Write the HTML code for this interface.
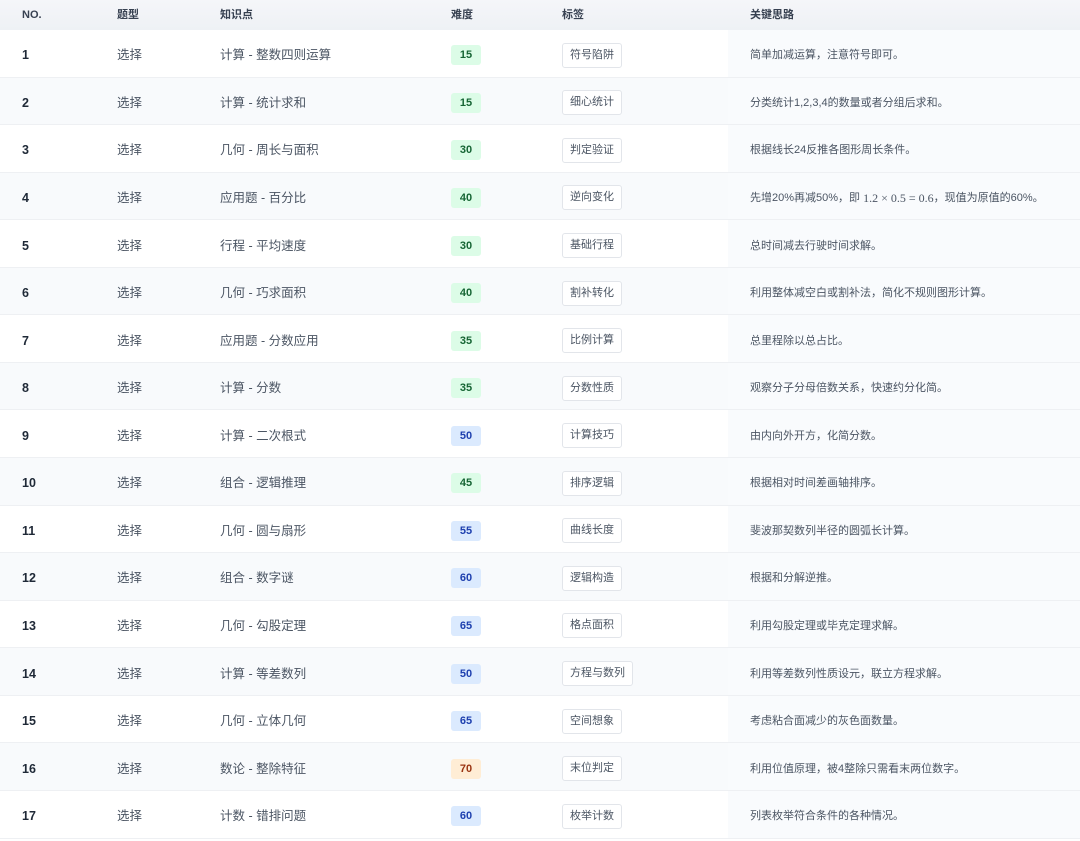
<!DOCTYPE html>
<html><head><meta charset="utf-8"><style>
*{margin:0;padding:0;box-sizing:border-box}
body{width:1080px;height:841px;overflow:hidden;background:#fff;font-family:"Liberation Sans","Noto Sans CJK SC",sans-serif;color:#1f2937}
.hd{position:absolute;left:0;top:0;width:1080px;height:30px;background:linear-gradient(#f5f6f9,#eef1f5);font-size:11px;font-weight:bold;color:#374151}
.hd>span,.r>span{position:absolute;top:0;height:100%;display:flex;align-items:center;white-space:nowrap;line-height:14px}
.r>span{top:2px}
.r{position:absolute;left:0;width:1080px;height:47.56px;border-bottom:1px solid #eef0f3;font-size:12.5px}
.r.alt{background:#f8fafc}
.r .kc{position:absolute;left:728px;top:0;width:352px;height:100%;background:#f9fbfd}
.no{left:22px;font-weight:bold;color:#1f2937}
.tp{left:117px;color:#4b5563}
.kp{left:220px;color:#4b5563}
.bw{left:451px}
i{font-style:normal}
.b{display:block;width:30px;height:20px;line-height:20px;text-align:center;font-size:11px;font-weight:bold;border-radius:3px}
.g{background:#dcfce7;color:#166534}.bl{background:#dbeafe;color:#1e40af}.o{background:#ffedd5;color:#9a3412}
.tw{left:562px}
.tg{display:block;height:25px;line-height:23px;padding:0 7px;border:1px solid #e2e5ea;border-radius:3px;background:#fff;font-size:11px;color:#4b5563}
.k{left:750px;font-size:11px;color:#4b5563}
</style></head><body>
<div class="hd"><span style="left:22px">NO.</span><span style="left:117px">题型</span><span style="left:220px">知识点</span><span style="left:451px">难度</span><span style="left:562px">标签</span><span style="left:750px">关键思路</span></div>
<div class="r" style="top:30px"><div class="kc"></div><span class="no">1</span><span class="tp">选择</span><span class="kp">计算 - 整数四则运算</span><span class="bw"><i class="b g">15</i></span><span class="tw"><i class="tg">符号陷阱</i></span><span class="k">简单加减运算，注意符号即可。</span></div>
<div class="r alt" style="top:77.56px"><div class="kc"></div><span class="no">2</span><span class="tp">选择</span><span class="kp">计算 - 统计求和</span><span class="bw"><i class="b g">15</i></span><span class="tw"><i class="tg">细心统计</i></span><span class="k">分类统计1,2,3,4的数量或者分组后求和。</span></div>
<div class="r" style="top:125.12px"><div class="kc"></div><span class="no">3</span><span class="tp">选择</span><span class="kp">几何 - 周长与面积</span><span class="bw"><i class="b g">30</i></span><span class="tw"><i class="tg">判定验证</i></span><span class="k">根据线长24反推各图形周长条件。</span></div>
<div class="r alt" style="top:172.68px"><div class="kc"></div><span class="no">4</span><span class="tp">选择</span><span class="kp">应用题 - 百分比</span><span class="bw"><i class="b g">40</i></span><span class="tw"><i class="tg">逆向变化</i></span><span class="k">先增20%再减50%，即&nbsp;<b style="font-weight:normal;font-family:'Liberation Serif',serif;font-size:12px">1.2 × 0.5 = 0.6</b>，现值为原值的60%。</span></div>
<div class="r" style="top:220.24px"><div class="kc"></div><span class="no">5</span><span class="tp">选择</span><span class="kp">行程 - 平均速度</span><span class="bw"><i class="b g">30</i></span><span class="tw"><i class="tg">基础行程</i></span><span class="k">总时间减去行驶时间求解。</span></div>
<div class="r alt" style="top:267.8px"><div class="kc"></div><span class="no">6</span><span class="tp">选择</span><span class="kp">几何 - 巧求面积</span><span class="bw"><i class="b g">40</i></span><span class="tw"><i class="tg">割补转化</i></span><span class="k">利用整体减空白或割补法，简化不规则图形计算。</span></div>
<div class="r" style="top:315.36px"><div class="kc"></div><span class="no">7</span><span class="tp">选择</span><span class="kp">应用题 - 分数应用</span><span class="bw"><i class="b g">35</i></span><span class="tw"><i class="tg">比例计算</i></span><span class="k">总里程除以总占比。</span></div>
<div class="r alt" style="top:362.92px"><div class="kc"></div><span class="no">8</span><span class="tp">选择</span><span class="kp">计算 - 分数</span><span class="bw"><i class="b g">35</i></span><span class="tw"><i class="tg">分数性质</i></span><span class="k">观察分子分母倍数关系，快速约分化简。</span></div>
<div class="r" style="top:410.48px"><div class="kc"></div><span class="no">9</span><span class="tp">选择</span><span class="kp">计算 - 二次根式</span><span class="bw"><i class="b bl">50</i></span><span class="tw"><i class="tg">计算技巧</i></span><span class="k">由内向外开方，化简分数。</span></div>
<div class="r alt" style="top:458.04px"><div class="kc"></div><span class="no">10</span><span class="tp">选择</span><span class="kp">组合 - 逻辑推理</span><span class="bw"><i class="b g">45</i></span><span class="tw"><i class="tg">排序逻辑</i></span><span class="k">根据相对时间差画轴排序。</span></div>
<div class="r" style="top:505.6px"><div class="kc"></div><span class="no">11</span><span class="tp">选择</span><span class="kp">几何 - 圆与扇形</span><span class="bw"><i class="b bl">55</i></span><span class="tw"><i class="tg">曲线长度</i></span><span class="k">斐波那契数列半径的圆弧长计算。</span></div>
<div class="r alt" style="top:553.16px"><div class="kc"></div><span class="no">12</span><span class="tp">选择</span><span class="kp">组合 - 数字谜</span><span class="bw"><i class="b bl">60</i></span><span class="tw"><i class="tg">逻辑构造</i></span><span class="k">根据和分解逆推。</span></div>
<div class="r" style="top:600.72px"><div class="kc"></div><span class="no">13</span><span class="tp">选择</span><span class="kp">几何 - 勾股定理</span><span class="bw"><i class="b bl">65</i></span><span class="tw"><i class="tg">格点面积</i></span><span class="k">利用勾股定理或毕克定理求解。</span></div>
<div class="r alt" style="top:648.28px"><div class="kc"></div><span class="no">14</span><span class="tp">选择</span><span class="kp">计算 - 等差数列</span><span class="bw"><i class="b bl">50</i></span><span class="tw"><i class="tg">方程与数列</i></span><span class="k">利用等差数列性质设元，联立方程求解。</span></div>
<div class="r" style="top:695.84px"><div class="kc"></div><span class="no">15</span><span class="tp">选择</span><span class="kp">几何 - 立体几何</span><span class="bw"><i class="b bl">65</i></span><span class="tw"><i class="tg">空间想象</i></span><span class="k">考虑粘合面减少的灰色面数量。</span></div>
<div class="r alt" style="top:743.4px"><div class="kc"></div><span class="no">16</span><span class="tp">选择</span><span class="kp">数论 - 整除特征</span><span class="bw"><i class="b o">70</i></span><span class="tw"><i class="tg">末位判定</i></span><span class="k">利用位值原理，被4整除只需看末两位数字。</span></div>
<div class="r" style="top:790.96px"><div class="kc"></div><span class="no">17</span><span class="tp">选择</span><span class="kp">计数 - 错排问题</span><span class="bw"><i class="b bl">60</i></span><span class="tw"><i class="tg">枚举计数</i></span><span class="k">列表枚举符合条件的各种情况。</span></div>
</body></html>
